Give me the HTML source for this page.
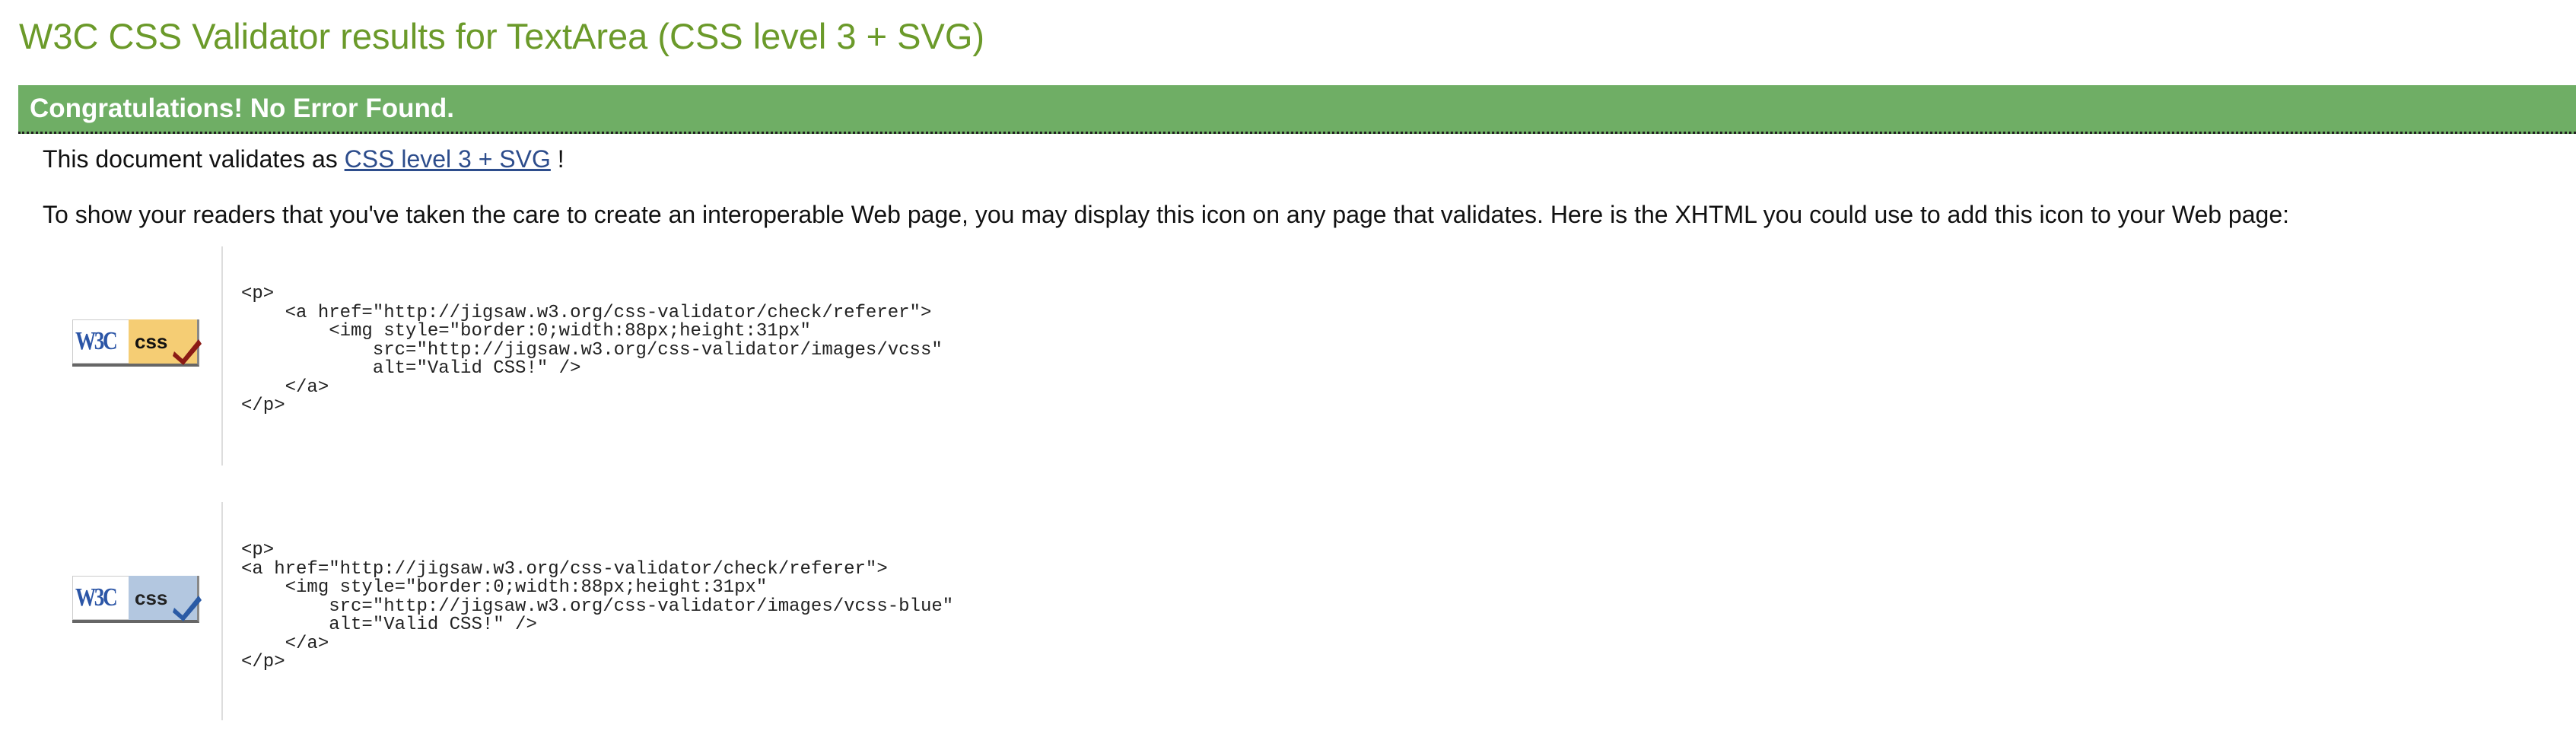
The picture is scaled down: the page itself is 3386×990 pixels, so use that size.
<!DOCTYPE html>
<html><head><meta charset="utf-8"><style>
body{margin:0;width:3386px;height:990px;background:#fff;font-family:"Liberation Sans",Arial,sans-serif;position:relative;overflow:hidden}
.a{position:absolute;white-space:nowrap}
h1{position:absolute;left:25px;top:20px;margin:0;font-weight:normal;font-size:47px;color:#6b9a2a;white-space:nowrap}
.band{position:absolute;left:24px;right:0;top:112px;height:61px;background:#6fae65;border-bottom:3px dotted #222}
.band span{position:absolute;left:15px;top:11px;font-weight:bold;font-size:35px;color:#fff}
.t{font-size:32px;color:#111}
a{color:#2d4d8c}
.vl{position:absolute;left:291px;width:2px;background:#ddd}
pre{position:absolute;left:317px;margin:0;font-family:"Liberation Mono",monospace;font-size:24px;line-height:24.5px;color:#222}
.badge{position:absolute;left:95px;width:164px;height:58px;border-right:3px solid #888;border-bottom:4px solid #666;background:#fff;box-shadow:inset 0 0 0 1px #ccc}
.badge .r{position:absolute;left:74px;top:0;right:0;bottom:0}
.badge .w{position:absolute;left:4px;top:10px;font:bold 34px "Liberation Serif",serif;color:#2b55a6;letter-spacing:-3px;transform:scaleX(.8);transform-origin:left}
.badge .c{position:absolute;left:82px;top:14px;font:bold 26px "Liberation Sans",sans-serif;color:#111}
</style></head><body>
<h1>W3C CSS Validator results for TextArea (CSS level 3 + SVG)</h1>
<div class="band"><span>Congratulations! No Error Found.</span></div>
<div class="a t" style="left:56px;top:191px">This document validates as <a href="#">CSS level 3 + SVG</a> !</div>
<div class="a t" style="left:56px;top:264px">To show your readers that you've taken the care to create an interoperable Web page, you may display this icon on any page that validates. Here is the XHTML you could use to add this icon to your Web page:</div>

<div class="vl" style="top:324px;height:288px"></div>
<div class="badge" style="top:420px"><div class="r" style="background:#f5cd74"></div><div class="w">W3C</div><div class="c">css</div>
<svg style="position:absolute;left:132px;top:22px" width="40" height="40" viewBox="0 0 40 40"><path d="M2 20 L13 30 L34 4 L38 10 L14 38 L0 26 Z" fill="#8b1a14"/></svg></div>
<pre style="top:375px">&lt;p&gt;
    &lt;a href="http://jigsaw.w3.org/css-validator/check/referer"&gt;
        &lt;img style="border:0;width:88px;height:31px"
            src="http://jigsaw.w3.org/css-validator/images/vcss"
            alt="Valid CSS!" /&gt;
    &lt;/a&gt;
&lt;/p&gt;</pre>

<div class="vl" style="top:660px;height:287px"></div>
<div class="badge" style="top:757px"><div class="r" style="background:#b3c7e0"></div><div class="w">W3C</div><div class="c" style="color:#222">css</div>
<svg style="position:absolute;left:132px;top:22px" width="40" height="40" viewBox="0 0 40 40"><path d="M2 20 L13 30 L34 4 L38 10 L14 38 L0 26 Z" fill="#2a5aa5"/></svg></div>
<pre style="top:712px">&lt;p&gt;
&lt;a href="http://jigsaw.w3.org/css-validator/check/referer"&gt;
    &lt;img style="border:0;width:88px;height:31px"
        src="http://jigsaw.w3.org/css-validator/images/vcss-blue"
        alt="Valid CSS!" /&gt;
    &lt;/a&gt;
&lt;/p&gt;</pre>
</body></html>
